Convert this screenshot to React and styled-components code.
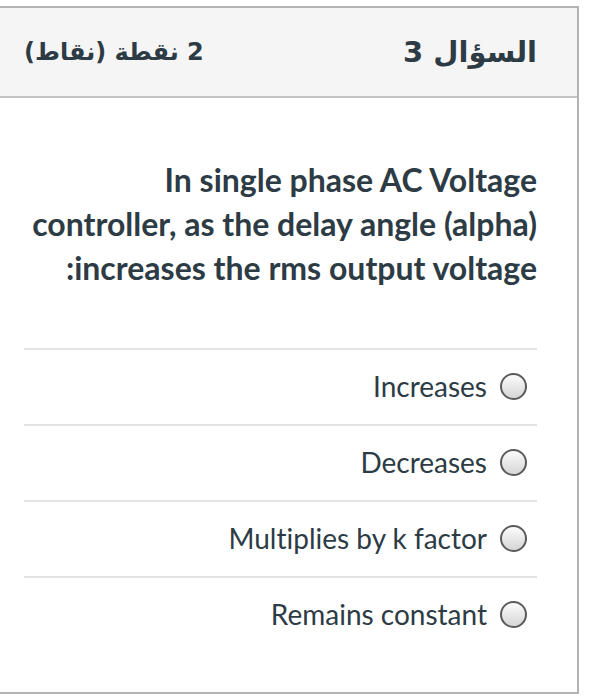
import React from "react";
import styled, { createGlobalStyle } from "styled-components";

const GlobalStyle = createGlobalStyle`
  body {
    margin: 0;
    background: #fff;
    font-family: Lato, "DejaVu Sans", sans-serif;
    font-variant-ligatures: no-common-ligatures;
  }
`;

const questionLines = [
  "In single phase AC Voltage",
  "controller, as the delay angle (alpha)",
  "increases the rms output voltage:",
];

const options = ["Increases", "Decreases", "Multiplies by k factor", "Remains constant"];

export default function App() {
  return (
    <>
      <GlobalStyle />
      <Page>
        <Card dir="rtl">
          <Header>
            <Title>السؤال 3</Title>
            <Points>2 نقطة (نقاط)</Points>
          </Header>
          <Body>
            <Question>
              {questionLines.map((l) => (
                <Line key={l}>{l}</Line>
              ))}
            </Question>
            <Options>
              {options.map((o) => (
                <Option key={o}>
                  <Radio />
                  <Label>{o}</Label>
                </Option>
              ))}
            </Options>
          </Body>
        </Card>
      </Page>
    </>
  );
}

const Page = styled.div`
  padding-top: 6px;
  width: 597px;
`;

const Card = styled.div`
  width: 579px;
  border: 2px solid #b3b3b3;
  border-left: none;
  background: #fff;
  box-sizing: border-box;
`;

const Header = styled.div`
  height: 90px;
  display: flex;
  align-items: center;
  justify-content: space-between;
  padding: 0 40px 0 24px;
  background: #f5f5f5;
  border-bottom: 2px solid #c4c4c4;
  box-sizing: border-box;
`;

const Title = styled.div`
  font-family: "DejaVu Sans", sans-serif;
  font-weight: bold;
  font-size: 29px;
  color: #2d3b45;
`;

const Points = styled.div`
  font-family: "DejaVu Sans", sans-serif;
  font-weight: bold;
  font-size: 24px;
  color: #2d3b45;
`;

const Body = styled.div`
  padding: 60px 40px 40px 20px;
`;

const Question = styled.div`
  font-family: Lato, sans-serif;
  font-weight: bold;
  font-size: 32px;
  line-height: 44px;
  color: #2d3b45;
  margin-bottom: 58px;
`;

const Line = styled.div`
  white-space: nowrap;
`;

const Options = styled.div`
  display: flex;
  flex-direction: column;
  margin-left: 4px;
`;

const Option = styled.div`
  height: 76px;
  display: flex;
  align-items: center;
  gap: 13px;
  padding-right: 10px;
  padding-bottom: 2px;
  border-top: 2px solid #e4e4e4;
  box-sizing: border-box;
`;

const Radio = styled.span`
  width: 27px;
  height: 27px;
  border-radius: 50%;
  border: 2px solid #5a5a5a;
  background: linear-gradient(#fbfbfb, #d6d6d6);
  box-sizing: border-box;
  flex-shrink: 0;
`;

const Label = styled.span`
  font-family: Lato, sans-serif;
  font-size: 28px;
  color: #2d3b45;
`;
